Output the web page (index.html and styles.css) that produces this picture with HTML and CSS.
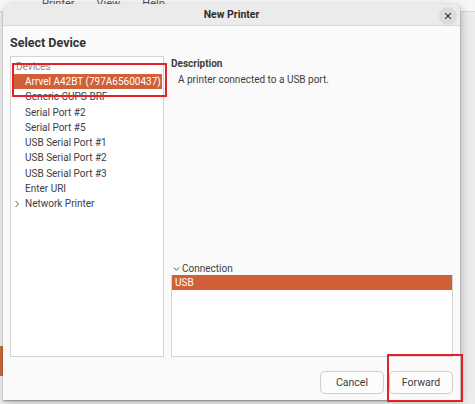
FILE: index.html
```html
<!DOCTYPE html>
<html lang="en">
<head>
    <meta charset="UTF-8">
    <title>New Printer</title>
    <link rel="stylesheet" href="styles.css">
</head>
<body>
    <!-- app window behind the dialog -->
    <div class="app">
        <div class="app-menu">
            <span>Printer</span>
            <span>View</span>
            <span>Help</span>
        </div>
        <div class="app-body">
            <div class="app-side"></div>
        </div>
    </div>

    <div class="dialog">
        <div class="titlebar">
            <span class="title">New Printer</span>
            <span class="close">
                <svg width="8" height="8" viewBox="0 0 8 8"><path d="M1.2 1.2 L6.8 6.8 M6.8 1.2 L1.2 6.8" stroke="#333" stroke-width="1.2"/></svg>
            </span>
        </div>

        <div class="content">
            <h1 class="heading">Select Device</h1>

            <div class="panes">
                <div class="device-list">
                    <div class="list-header">Devices</div>
                    <div class="row selected">Arrvel A42BT (797A65600437)</div>
                    <div class="row">Generic CUPS-BRF</div>
                    <div class="row">Serial Port #2</div>
                    <div class="row">Serial Port #5</div>
                    <div class="row">USB Serial Port #1</div>
                    <div class="row">USB Serial Port #2</div>
                    <div class="row">USB Serial Port #3</div>
                    <div class="row">Enter URI</div>
                    <div class="row expander">
                        <svg class="arrow" width="6" height="8" viewBox="0 0 6 8"><path d="M1.5 1 L4.5 4 L1.5 7" fill="none" stroke="#555" stroke-width="1"/></svg>
                        Network Printer
                    </div>
                </div>

                <div class="details">
                    <div class="desc-title">Description</div>
                    <div class="desc-text">A printer connected to a USB port.</div>

                    <div class="spacer"></div>

                    <div class="conn-title">
                        <svg width="7" height="6" viewBox="0 0 7 6"><path d="M0.8 1.5 L3.5 4.3 L6.2 1.5" fill="none" stroke="#555" stroke-width="1"/></svg>
                        Connection
                    </div>
                    <div class="conn-list">
                        <div class="conn-row selected">USB</div>
                    </div>
                </div>
            </div>

            <div class="actions">
                <button class="btn">Cancel</button>
                <button class="btn">Forward</button>
            </div>
        </div>
    </div>

    <!-- red annotation frames -->
    <div class="mark mark-device"></div>
    <div class="mark mark-forward"></div>
</body>
</html>
```

FILE: styles.css
```css
body {
    margin: 0;
    width: 475px;
    height: 404px;
    overflow: hidden;
    position: relative;
    background: #e9e9e9;
    font-family: Roboto, "Noto Sans", sans-serif;
    font-size: 10px;
    color: #3d3d3d;
}

/* background application */
.app {
    height: 404px;
    display: flex;
    flex-direction: column;
}

.app-menu {
    height: 11px;
    background: #f6f6f6;
    border-bottom: 1px solid #d6d6d6;
    display: flex;
    gap: 22px;
    padding-left: 42px;
    font-size: 11px;
    line-height: 8px;
    color: #555;
}

.app-body {
    flex: 1;
    background: #ececec;
}

.app-side {
    margin-top: 334px;
    width: 3px;
    height: 30px;
    background: #c96a40;
}

/* dialog window */
.dialog {
    position: absolute;
    left: 3px;
    top: 4px;
    width: 457px;
    height: 396px;
    background: #fafafa;
    border-radius: 8px 8px 0 0;
    box-shadow: 0 1px 2px rgba(0, 0, 0, 0.35), 2px 2px 9px rgba(0, 0, 0, 0.22);
    display: flex;
    flex-direction: column;
    overflow: hidden;
}

.titlebar {
    height: 24px;
    background: #ebebeb;
    border-bottom: 1px solid #d8d8d8;
    display: flex;
    align-items: center;
    justify-content: center;
    position: relative;
}

.title {
    font-weight: bold;
    font-size: 10.5px;
    color: #2e2e2e;
}

.close {
    position: absolute;
    right: 3px;
    top: 3px;
    width: 18px;
    height: 18px;
    border-radius: 50%;
    background: #dcdcdc;
    display: flex;
    align-items: center;
    justify-content: center;
}

.content {
    flex: 1;
    display: flex;
    flex-direction: column;
    padding: 0 7px 6px 7px;
}

.heading {
    margin: 8px 0 0 0;
    font-size: 12.5px;
    font-weight: bold;
    line-height: 18px;
    color: #333;
}

.panes {
    display: flex;
    gap: 7px;
    margin-top: 4px;
    height: 301px;
}

.device-list {
    width: 150px;
    background: #fff;
    border: 1px solid #d4d4d4;
    padding: 1px 1px 0 1px;
}

.list-header {
    height: 16px;
    line-height: 18px;
    padding-left: 4px;
    color: #8a8a8a;
}

.row {
    height: 15.3px;
    line-height: 15.3px;
    padding-left: 13px;
    white-space: nowrap;
    position: relative;
}

.row.selected {
    background: #d15f37;
    color: #fff;
}

.arrow {
    position: absolute;
    left: 2px;
    top: 4px;
}

.details {
    flex: 1;
    display: flex;
    flex-direction: column;
}

.desc-title {
    font-weight: bold;
    line-height: 14px;
    margin-top: 1px;
}

.desc-text {
    padding-left: 7px;
    line-height: 17px;
}

.spacer {
    flex: 1;
}

.conn-title {
    display: flex;
    align-items: center;
    gap: 2px;
    padding-left: 2px;
    line-height: 12px;
}

.conn-list {
    height: 81px;
    background: #fff;
    border: 1px solid #d4d4d4;
    border-top: none;
}

.conn-row {
    height: 15px;
    line-height: 15px;
    padding-left: 3px;
}

.conn-row.selected {
    background: #d15f37;
    color: #fff;
}

.actions {
    display: flex;
    justify-content: flex-end;
    gap: 5px;
    margin-top: 14px;
}

.btn {
    width: 64px;
    height: 23px;
    border: 1px solid #cfcfcf;
    border-radius: 5px;
    background: #fcfcfc;
    font-family: inherit;
    font-size: 10.5px;
    color: #3d3d3d;
    padding: 0;
}

/* annotation frames */
.mark {
    position: absolute;
    border: 2px solid #e3212b;
}

.mark-device {
    left: 12px;
    top: 63px;
    width: 151px;
    height: 30px;
}

.mark-forward {
    left: 387px;
    top: 354px;
    width: 72px;
    height: 44px;
}
```
